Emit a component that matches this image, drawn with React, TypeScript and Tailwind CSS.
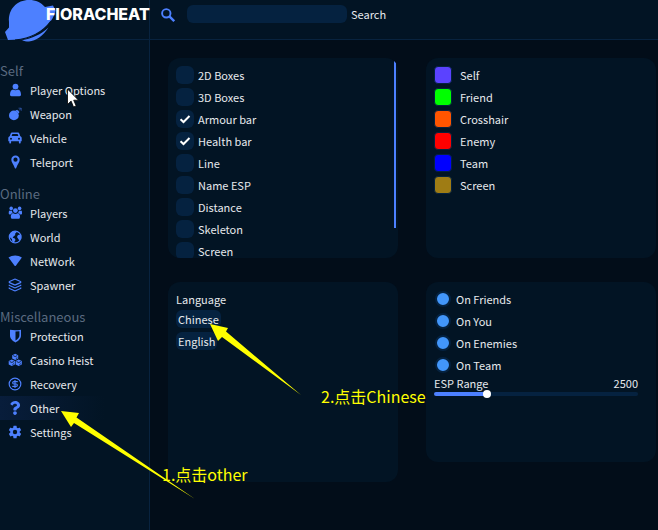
import { useState } from "react";
import type { ReactNode } from "react";
import { clsx } from "clsx";
import { CircleDollarSign, Layers } from "lucide-react";
import { FaQuestion } from "react-icons/fa";
import { IoSettingsSharp } from "react-icons/io5";

function Glyph({ children }: { children: ReactNode }) {
  return (
    <svg viewBox="0 0 14 14" className="size-3.5" fill="currentColor">
      {children}
    </svg>
  );
}

function SearchIcon() {
  return (
    <svg viewBox="0 0 14 14" className="mr-2 mt-[3px] size-3.5 text-[#4d80ff]" fill="none" stroke="currentColor">
      <circle cx="5.3" cy="5.3" r="4.2" strokeWidth="1.9" />
      <path d="M8.4 8.4 13.2 13.2" strokeWidth="2.4" />
    </svg>
  );
}

function PersonIcon() {
  return (
    <Glyph>
      <circle cx="7.5" cy="3.6" r="2.9" />
      <path d="M2 11.5C2 8.3 3.5 6.7 5 6.5c1.4 1 3.6 1 5 0 1.5.2 3 1.8 3 5 0 1-.5 1.7-1.5 1.7h-8C2.5 13.2 2 12.5 2 11.5z" />
    </Glyph>
  );
}

function BombIcon() {
  return (
    <Glyph>
      <circle cx="5.9" cy="8.4" r="4.9" />
      <path d="M7.5 3.6 9.2 2.7 11.5 5 10.6 6.6Z" />
      <path d="M10.5 1.2h2.7v2.6M10.8 3.6l2.2-2.2" fill="none" stroke="currentColor" strokeWidth="0.7" opacity="0.7" />
    </Glyph>
  );
}

function CarIcon() {
  return (
    <Glyph>
      <path
        fillRule="evenodd"
        d="M4.3 1.5h5.4c.9 0 1.4.4 1.7 1.2l.9 2.5c.9.3 1.4.9 1.4 1.8v3.3h-1v1.2c0 .6-.4 1-.9 1s-.9-.4-.9-1v-1.200H3.1v1.2c0 .6-.4 1-.9 1s-.9-.4-.9-1v-1.200h-1V7c0-.9.5-1.5 1.4-1.8l.9-2.5c.3-.8.8-1.2 1.7-1.2zM4.4 3.1 3.6 5.1h6.8l-.8-2zM3 6.8a1 1 0 1 0 0 2 1 1 0 0 0 0-2zM11 6.8a1 1 0 1 0 0 2 1 1 0 0 0 0-2z"
      />
    </Glyph>
  );
}

function PinIcon() {
  return (
    <Glyph>
      <path
        fillRule="evenodd"
        d="M7.5.5a4.2 4.2 0 0 1 4.2 4.2c0 2.3-2 4.3-3.5 8.2q-.7 1-1.4 0C5.3 9 3.3 7 3.3 4.7A4.2 4.2 0 0 1 7.5.5zM7.5 2.6a2.1 2.1 0 1 0 0 4.2 2.1 2.1 0 0 0 0-4.2z"
      />
    </Glyph>
  );
}

function PlayersIcon() {
  return (
    <Glyph>
      <circle cx="3.2" cy="2.4" r="1.8" />
      <circle cx="11.6" cy="2.4" r="1.8" />
      <circle cx="7.4" cy="4.6" r="2.4" />
      <path d="M1 4.7h3c0 1.2.4 1.9 1.1 2.5-1.2.1-2 .4-2.6 1.2h-.9C1 8.4.7 7.9.7 7z" />
      <path d="M13.8 4.7h-3c0 1.2-.4 1.9-1.1 2.5 1.2.1 2 .4 2.6 1.2h.9c.6 0 .9-.5.9-1.4z" />
      <path d="M2.8 10.5c0-2 1-3.2 2.5-3.3 1.2.9 3 .9 4.2 0 1.5.1 2.5 1.3 2.5 3.3 0 1.5-.5 2.3-1.5 2.3H4.3c-1 0-1.5-.8-1.5-2.3z" />
    </Glyph>
  );
}

function WorldIcon() {
  return (
    <Glyph>
      <circle cx="7.2" cy="7" r="5.9" fill="none" stroke="currentColor" strokeWidth="1.2" />
      <path d="M1.5 5 4 1.8 7.5 1 8.5 2.5 7 3.8 7.3 5 5.5 6.5 4.7 7.7 6.8 8.5 7.5 10 6 12.5 4.3 11.5 3.9 9 1.5 7Z" />
      <path d="M10 5 12.7 4.5 13.2 8.5 11.3 10.5 10 8.5 9 7Z" />
    </Glyph>
  );
}

function NetworkIcon() {
  return (
    <Glyph>
      <path d="M.5 3.6C4.3.8 10 .8 13.9 3.6L7.8 11.7Q7.2 12.2 6.6 11.7Z" />
    </Glyph>
  );
}

function ShieldIcon() {
  return (
    <Glyph>
      <path
        fillRule="evenodd"
        d="M2 .8q5.500 1 11-.1V6.500c0 3.200-2.600 5.400-5.500 7-2.900-1.600-5.500-3.800-5.500-7zM7.500 2.500v9c2.200-1.200 3.900-3 3.900-5V2.200z"
      />
    </Glyph>
  );
}

function CubesIcon() {
  return (
    <Glyph>
      <path d="M7.2.8 10.2 2.2V5.6L7.2 7 4.2 5.6V2.2ZM3.8 6.6 6.9 8V11.4L3.8 12.9.7 11.4V8ZM10.7 6.6 13.8 8V11.4L10.7 12.9 7.6 11.4V8Z" />
      <path
        d="M5.2 2.6 7.2 3.6 9.2 2.6M1.7 8.5 3.8 9.5 5.9 8.5M8.6 8.5 10.7 9.5 12.8 8.5M7.9 5.5 9.3 4.8M4.5 11.5 5.9 10.7M11.4 11.5 12.8 10.7"
        fill="none"
        stroke="#021424"
        strokeWidth="0.8"
      />
    </Glyph>
  );
}

interface NavItem {
  label: string;
  icon: ReactNode;
}

const NAV_GROUPS: { title: string; items: NavItem[] }[] = [
  {
    title: "Self",
    items: [
      { label: "Player Options", icon: <PersonIcon /> },
      { label: "Weapon", icon: <BombIcon /> },
      { label: "Vehicle", icon: <CarIcon /> },
      { label: "Teleport", icon: <PinIcon /> },
    ],
  },
  {
    title: "Online",
    items: [
      { label: "Players", icon: <PlayersIcon /> },
      { label: "World", icon: <WorldIcon /> },
      { label: "NetWork", icon: <NetworkIcon /> },
      { label: "Spawner", icon: <Layers className="size-3.5" /> },
    ],
  },
  {
    title: "Miscellaneous",
    items: [
      { label: "Protection", icon: <ShieldIcon /> },
      { label: "Casino Heist", icon: <CubesIcon /> },
      { label: "Recovery", icon: <CircleDollarSign className="size-3.5" /> },
      { label: "Other", icon: <FaQuestion className="size-3.5" /> },
      { label: "Settings", icon: <IoSettingsSharp className="size-3.5" /> },
    ],
  },
];

const ESP_OPTIONS = [
  { label: "2D Boxes", on: false },
  { label: "3D Boxes", on: false },
  { label: "Armour bar", on: true },
  { label: "Health bar", on: true },
  { label: "Line", on: false },
  { label: "Name ESP", on: false },
  { label: "Distance", on: false },
  { label: "Skeleton", on: false },
  { label: "Screen", on: false },
];

const COLORS = [
  { label: "Self", swatch: "bg-[#5b42ff]" },
  { label: "Friend", swatch: "bg-[#00ff00]" },
  { label: "Crosshair", swatch: "bg-[#ff5500]" },
  { label: "Enemy", swatch: "bg-[#ff0000]" },
  { label: "Team", swatch: "bg-[#0000ff]" },
  { label: "Screen", swatch: "bg-[#9f7c14]" },
];

const TARGETS = ["On Friends", "On You", "On Enemies", "On Team"];

const MAX_RANGE = 10000;

function Logo() {
  return (
    <svg viewBox="0 0 60 44" className="absolute left-0 top-0 h-11 w-15" fill="#4d80ff">
      <path d="M9 22C8 9 17 0 29 0c7 0 12 2.5 16 7l8-1.5 2.5 5C54 18 49 25 41 31c-7 5-14 8-22 8.500L8 40 5 32l4-4.500z" />
      <path d="M48.5 27.5C43 36 36 41 29 41.5c-3 0-5-.5-7-1.300C32 38.5 41 34.5 48.5 27.5z" />
      <path d="M15 40C30 38.5 43 32 51 21" fill="none" stroke="#021426" strokeWidth="1.2" />
    </svg>
  );
}

function Panel({ className, children }: { className?: string; children: ReactNode }) {
  return (
    <section className={clsx("relative overflow-hidden rounded-xl bg-[#021424] p-2", className)}>{children}</section>
  );
}

function CheckRow({ label, defaultChecked }: { label: string; defaultChecked: boolean }) {
  return (
    <label className="flex h-[18px] items-center gap-1">
      <span className="relative size-[18px]">
        <input
          type="checkbox"
          defaultChecked={defaultChecked}
          className="peer block size-[18px] appearance-none rounded-md bg-[#052240]"
        />
        <svg
          viewBox="0 0 18 18"
          className="pointer-events-none absolute inset-0 hidden peer-checked:block"
          fill="none"
          stroke="#fff"
          strokeWidth="2"
        >
          <path d="M4.5 9.2 7.5 12 13.5 6" />
        </svg>
      </span>
      <span className="leading-5">{label}</span>
    </label>
  );
}

/* Tutorial arrows, captions and the pointer drawn over the menu */
function Annotations() {
  return (
    <div className="pointer-events-none absolute left-0 top-0 font-['Noto_Sans_CJK_SC',sans-serif] text-base leading-5 text-[#ffff00]">
      <svg width="310" height="510" viewBox="0 0 310 510" fill="#ffff00">
        <path d="M61 411 79 413 76.5 417.5 195 499 74 423 71 427Z" />
        <path d="M210 324 228 328 226 331.5 301 395 222 337 218 341Z" />
        <path
          d="M67.5 89v15.500l3.600-3.400 2.400 5.900 2.700-1.100-2.500-5.700h4.800z"
          fill="#fff"
          stroke="#000"
          strokeWidth="0.8"
        />
      </svg>
      <span className="absolute left-[162px] top-[464px] whitespace-nowrap">1.点击other</span>
      <span className="absolute left-[321px] top-[386px] whitespace-nowrap">2.点击Chinese</span>
    </div>
  );
}

export default function App() {
  const [active, setActive] = useState("Other");
  const [range, setRange] = useState(2500);
  const percent = (range / MAX_RANGE) * 100;

  return (
    <div className="relative flex min-h-screen flex-col bg-[#020d19] font-['Noto_Sans_CJK_SC',sans-serif] text-[11px] text-[#e6e9ed]">
      <header className="flex h-10 border-b border-[#08233f] bg-[#021424]">
        <div className="relative w-[150px] shrink-0 border-r border-[#08233f]">
          <Logo />
          <h1 className="relative pl-[46px] pt-1 font-['Inter',sans-serif] text-base font-extrabold leading-5 text-white">
            FIORACHEAT
          </h1>
        </div>
        <label className="flex items-start gap-1 pl-[11px] pt-[5px]">
          <SearchIcon />
          <input type="text" className="h-[18px] w-40 rounded-md bg-[#052240] px-1 outline-none" />
          <span className="leading-[18px]">Search</span>
        </label>
      </header>

      <div className="flex flex-1">
        <nav className="w-[150px] shrink-0 border-r border-[#08233f] bg-[#021424] pt-[23px]">
          {NAV_GROUPS.map((group) => (
            <div key={group.title} className="pb-3">
              <h2 className="text-[13px] leading-[15px] text-[#5b6b80]">{group.title}</h2>
              {group.items.map((item) => (
                <button
                  key={item.label}
                  type="button"
                  onClick={() => setActive(item.label)}
                  className={clsx(
                    "flex h-6 w-full items-center gap-2 pl-2 text-left",
                    active === item.label && "bg-linear-to-r from-[#081d3b] to-transparent to-70%"
                  )}
                >
                  <span className="text-[#4d80ff]">{item.icon}</span>
                  {item.label}
                </button>
              ))}
            </div>
          ))}
        </nav>

        <main className="grid flex-1 grid-cols-2 content-start items-start gap-x-7 gap-y-6 pl-[18px] pr-0.5 pt-[18px]">
          <Panel className="flex h-[200px] flex-col gap-1">
            {ESP_OPTIONS.map((opt) => (
              <CheckRow key={opt.label} label={opt.label} defaultChecked={opt.on} />
            ))}
            <div className="absolute right-0.5 top-[3px] h-[167px] w-0.5 bg-[#4d80ff]" />
          </Panel>

          <Panel className="flex h-[200px] flex-col gap-1">
            {COLORS.map(({ label, swatch }) => (
              <label key={label} className="flex h-[18px] items-center gap-2">
                <button type="button" className={clsx("size-[18px] rounded border border-[#052240]", swatch)} />
                <span className="leading-5">{label}</span>
              </label>
            ))}
          </Panel>

          <Panel className="h-[200px]">
            <h3 className="mb-0.5 leading-[18px]">Language</h3>
            <div className="flex flex-col items-start gap-1">
              <button type="button" className="h-[18px] rounded-md bg-[#052240] px-0.5 leading-[18px]">
                Chinese
              </button>
              <button type="button" className="h-[18px] rounded-md bg-[#052240] px-0.5 leading-[18px]">
                English
              </button>
            </div>
          </Panel>

          <Panel className="h-[180px]">
            <div className="flex flex-col gap-1">
              {TARGETS.map((target) => (
                <label key={target} className="flex h-[18px] items-center gap-1">
                  <input
                    type="checkbox"
                    defaultChecked
                    className="m-px size-4 appearance-none rounded-full border-2 border-[#052240] bg-[#052240] checked:bg-[#4296fa]"
                  />
                  <span className="leading-5">{target}</span>
                </label>
              ))}
            </div>
            <div className="pr-2.5">
              <div className="flex justify-between leading-[18px]">
                <label htmlFor="esp-range">ESP Range</label>
                <output htmlFor="esp-range">{range}</output>
              </div>
              <input
                id="esp-range"
                type="range"
                min={0}
                max={MAX_RANGE}
                value={range}
                onChange={(e) => setRange(Number(e.target.value))}
                style={{ background: `linear-gradient(to right, #4d80ff ${percent}%, #052240 ${percent}%)` }}
                className="block h-1 w-full appearance-none rounded-xs [&::-webkit-slider-thumb]:size-2 [&::-webkit-slider-thumb]:appearance-none [&::-webkit-slider-thumb]:rounded-full [&::-webkit-slider-thumb]:bg-white"
              />
            </div>
          </Panel>
        </main>
      </div>

      <Annotations />
    </div>
  );
}
